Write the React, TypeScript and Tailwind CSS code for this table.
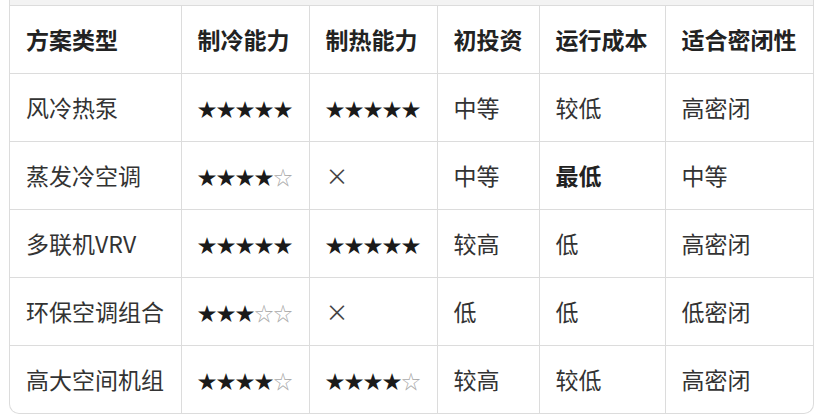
const headers = ["方案类型", "制冷能力", "制热能力", "初投资", "运行成本", "适合密闭性"];

const widths = ["w-[171px]", "w-[128px]", "w-[128px]", "w-[102px]", "w-[126px]", "w-[148px]"];

type Cell = { text: string; bold?: boolean };

const rows: Cell[][] = [
  [{ text: "风冷热泵" }, { text: "★★★★★" }, { text: "★★★★★" }, { text: "中等" }, { text: "较低" }, { text: "高密闭" }],
  [{ text: "蒸发冷空调" }, { text: "★★★★☆" }, { text: "×" }, { text: "中等" }, { text: "最低", bold: true }, { text: "中等" }],
  [{ text: "多联机VRV" }, { text: "★★★★★" }, { text: "★★★★★" }, { text: "较高" }, { text: "低" }, { text: "高密闭" }],
  [{ text: "环保空调组合" }, { text: "★★★☆☆" }, { text: "×" }, { text: "低" }, { text: "低" }, { text: "低密闭" }],
  [{ text: "高大空间机组" }, { text: "★★★★☆" }, { text: "★★★★☆" }, { text: "较高" }, { text: "较低" }, { text: "高密闭" }],
];

function Stars({ value }: { value: string }) {
  return (
    <span className="text-[19px]">
      {value.split("").map((c, i) => (
        <span key={i} className={c === "☆" ? "text-[#aaa]" : "text-[#1a1a1a]"}>
          {c}
        </span>
      ))}
    </span>
  );
}

function CellContent({ cell }: { cell: Cell }) {
  if (cell.text.includes("★") || cell.text.includes("☆")) return <Stars value={cell.text} />;
  if (cell.text === "×") return <span className="text-[#444]">{cell.text}</span>;
  return <span className={cell.bold ? "font-bold text-[#222]" : ""}>{cell.text}</span>;
}

export default function App() {
  return (
    <div className="h-[417px] w-[822px] bg-white font-['Noto_Sans_CJK_SC','Noto_Sans',sans-serif]">
      <div className="ml-[9px] w-[805px] overflow-hidden rounded-b-[10px] border-x border-b border-[#dcdcdc]">
        <div className="h-[6px] border-b border-[#dcdcdc] bg-[#f3f3f3]" />
        <table className="w-full table-fixed border-collapse text-[23px] text-[#333]">
          <thead>
            <tr className="h-[67px]">
              {headers.map((h, i) => (
                <th
                  key={h}
                  className={`${widths[i]} px-[16px] text-left font-bold text-[#222] ${i > 0 ? "border-l border-[#dcdcdc]" : ""} border-b border-[#dcdcdc]`}
                >
                  {h}
                </th>
              ))}
            </tr>
          </thead>
          <tbody>
            {rows.map((r, ri) => (
              <tr key={ri} className="h-[68px]">
                {r.map((c, ci) => (
                  <td
                    key={ci}
                    className={`px-[16px] ${ci > 0 ? "border-l border-[#dcdcdc]" : ""} ${ri < rows.length - 1 ? "border-b border-[#dcdcdc]" : ""}`}
                  >
                    <CellContent cell={c} />
                  </td>
                ))}
              </tr>
            ))}
          </tbody>
        </table>
      </div>
    </div>
  );
}
